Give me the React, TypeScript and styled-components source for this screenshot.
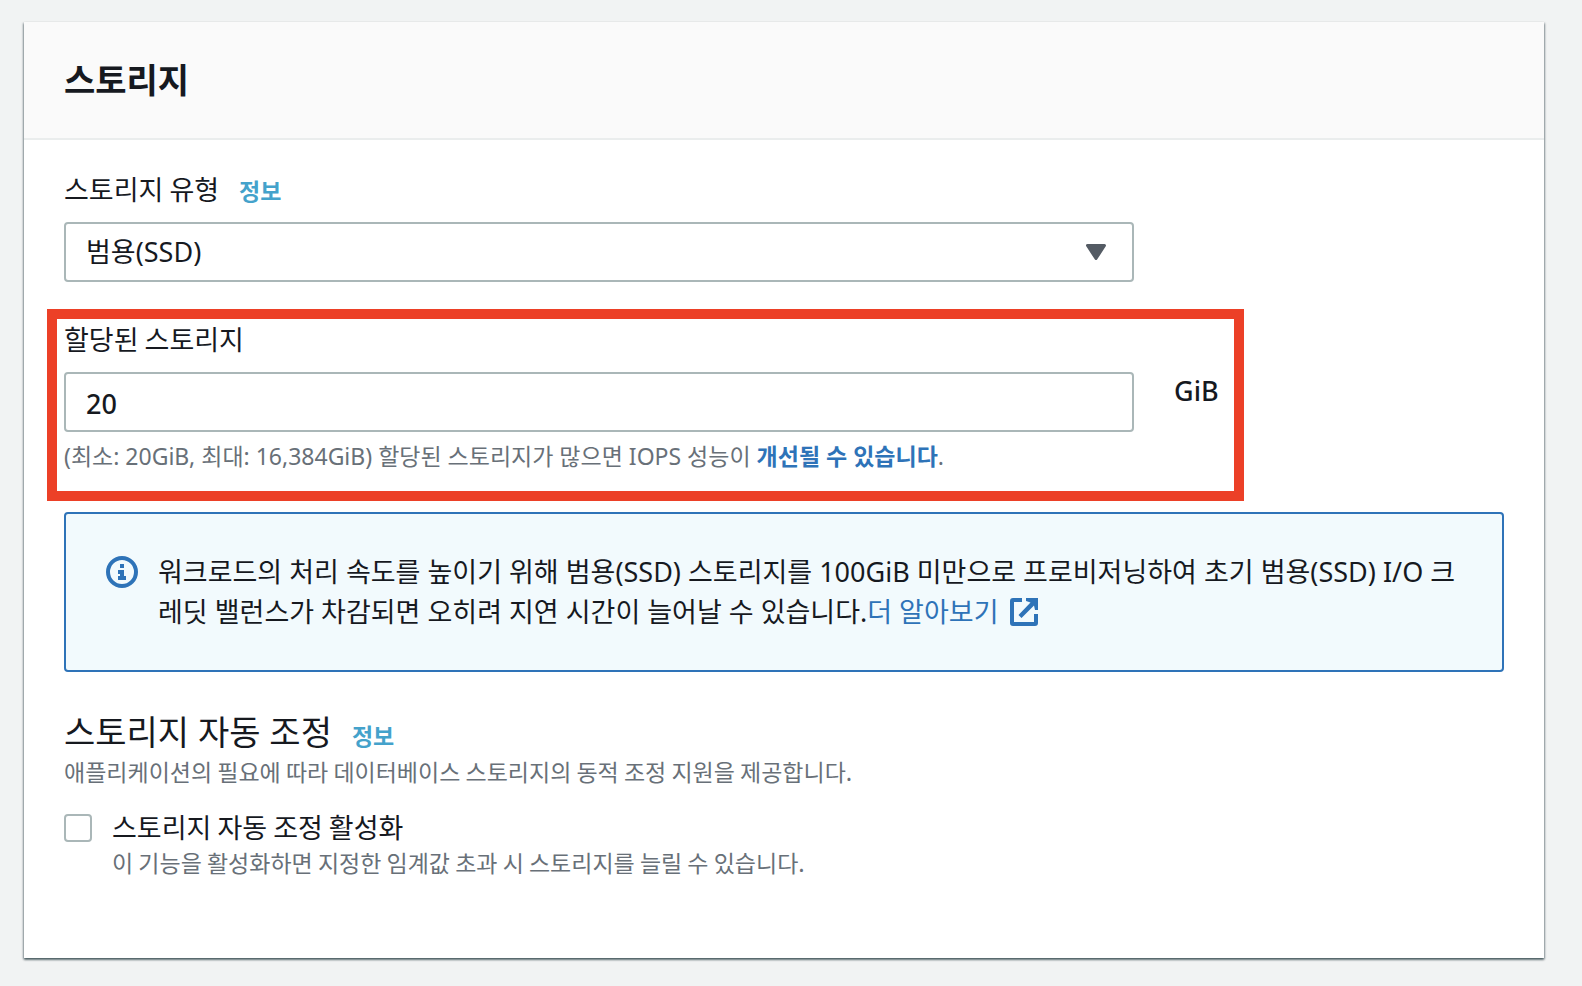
import React from 'react';
import styled, { createGlobalStyle } from 'styled-components';

const color = {
  page: '#f1f3f3',
  text: '#16191f',
  muted: '#687078',
  control: '#aab7b8',
  divider: '#eaeded',
  link: '#2e73b8',
  info: '#44a2cb',
  noticeBg: '#f2fafd',
  highlight: '#ec4027',
};

const font = {
  mixed: '"Noto Sans", "Noto Sans CJK KR", sans-serif',
  korean: '"Noto Sans CJK KR", "Noto Sans", sans-serif',
};

const GlobalStyle = createGlobalStyle`
  * { box-sizing: border-box; }
  body {
    margin: 0;
    background: ${color.page};
    color: ${color.text};
    font: 400 27px/40px ${font.mixed};
  }
  h2, h3, p { margin: 0; }
  input, select { font: inherit; color: inherit; }
`;

const Page = styled.main`
  padding: 22px 38px 28px 24px;
`;

const Card = styled.section`
  min-height: 936px;
  background: #fff;
  box-shadow: 0 2px 2px 0 rgba(0, 28, 36, 0.45), 1px 1px 2px 0 rgba(0, 28, 36, 0.3), -1px 1px 2px 0 rgba(0, 28, 36, 0.3);
`;

const CardHeader = styled.header`
  padding: 36px 40px;
  background: #fafafa;
  border-bottom: 2px solid ${color.divider};
`;

const CardTitle = styled.h2`
  font-size: 34px;
  line-height: 44px;
  font-weight: 700;
`;

const CardBody = styled.div`
  padding: 29px 40px;
`;

const TypeField = styled.div`
  width: calc(75% - 10px);
`;

const SizeField = styled.div`
  flex: 1;
`;

const LabelRow = styled.div`
  display: flex;
  align-items: baseline;
  gap: 20px;
`;

const FieldLabel = styled.label`
  display: block;
  margin-bottom: 13px;
  font-family: ${font.korean};
`;

const InfoLink = styled.a`
  color: ${color.info};
  font-size: 23px;
  line-height: 32px;
  font-weight: 700;
  text-decoration: none;
`;

const SelectBox = styled.div`
  position: relative;
`;

const Select = styled.select`
  display: block;
  width: 100%;
  height: 60px;
  padding: 0 60px 0 20px;
  appearance: none;
  background: #fff;
  border: 2px solid ${color.control};
  border-radius: 4px;
`;

const Caret = styled.svg`
  position: absolute;
  right: 28px;
  top: 22px;
  pointer-events: none;
`;

const TextInput = styled.input`
  display: block;
  width: 100%;
  height: 60px;
  padding: 2px 20px 0;
  background: #fff;
  border: 2px solid ${color.control};
  border-radius: 4px;
  font-weight: 500;
`;

const Highlight = styled.div`
  display: flex;
  gap: 40px;
  width: calc(75% + 117px);
  margin: 27px 0 11px -17px;
  padding: 0 7px 19px;
  border: 10px solid ${color.highlight};
`;

const Unit = styled.span`
  width: 53px;
  padding-top: 52px;
  font-weight: 500;
`;

const HelpText = styled.p<{ $mixed?: boolean }>`
  color: ${color.muted};
  font-family: ${(p) => (p.$mixed ? font.mixed : font.korean)};
  font-size: 23px;
  line-height: 32px;
`;

const FieldHelp = styled(HelpText)`
  margin-top: 8px;
`;

const TextLink = styled.a<{ $strong?: boolean }>`
  color: ${color.link};
  font-weight: ${(p) => (p.$strong ? 700 : 400)};
  text-decoration: none;
`;

const Notice = styled.div`
  display: flex;
  gap: 20px;
  padding: 38px 40px;
  background: ${color.noticeBg};
  border: 2px solid ${color.link};
  border-radius: 4px;
`;

const NoticeIcon = styled.svg`
  flex: none;
  margin-top: 4px;
`;

const ExternalIcon = styled.svg`
  margin-left: 12px;
  vertical-align: -4px;
`;

const Scaling = styled.section`
  margin-top: 37px;
`;

const SectionTitle = styled.h3`
  font-size: 34px;
  line-height: 46px;
  font-weight: 400;
`;

const CheckRow = styled.div`
  display: flex;
  align-items: flex-start;
  gap: 20px;
  margin-top: 21px;
`;

const Checkbox = styled.input`
  flex: none;
  width: 28px;
  height: 28px;
  margin: 6px 0 0;
  appearance: none;
  background: #fff;
  border: 2px solid ${color.control};
  border-radius: 4px;
`;

const CheckLabel = styled.label`
  display: block;
  font-family: ${font.korean};
  line-height: 38px;
`;

export default function App() {
  return (
    <>
      <GlobalStyle />
      <Page>
        <Card>
          <CardHeader>
            <CardTitle>스토리지</CardTitle>
          </CardHeader>
          <CardBody>
            <TypeField>
              <LabelRow>
                <FieldLabel htmlFor="storage-type">스토리지 유형</FieldLabel>
                <InfoLink href="#type-info">정보</InfoLink>
              </LabelRow>
              <SelectBox>
                <Select id="storage-type" defaultValue="gp">
                  <option value="gp">범용(SSD)</option>
                </Select>
                <Caret width="20" height="16" viewBox="0 0 20 16" aria-hidden="true">
                  <path d="M1.5 1.5h17L10 14.5z" fill="#545b64" stroke="#545b64" strokeWidth="3" strokeLinejoin="round" />
                </Caret>
              </SelectBox>
            </TypeField>

            <Highlight>
              <SizeField>
                <FieldLabel htmlFor="allocated">할당된 스토리지</FieldLabel>
                <TextInput id="allocated" inputMode="numeric" defaultValue="20" aria-describedby="allocated-help" />
                <FieldHelp $mixed id="allocated-help">
                  (최소: 20GiB, 최대: 16,384GiB) 할당된 스토리지가 많으면 IOPS 성능이{' '}
                  <TextLink $strong href="#iops">개선될 수 있습니다</TextLink>.
                </FieldHelp>
              </SizeField>
              <Unit>GiB</Unit>
            </Highlight>

            <Notice role="note">
              <NoticeIcon width="32" height="32" viewBox="0 0 32 32" aria-hidden="true">
                <circle cx="16" cy="16" r="14" fill="none" stroke={color.link} strokeWidth="4" />
                <path d="M14 8h4v4h-4zM12 14h6v6h2v4h-8v-4h2v-2h-2z" fill={color.link} />
              </NoticeIcon>
              <p>
                워크로드의 처리 속도를 높이기 위해 범용(SSD) 스토리지를 100GiB 미만으로 프로비저닝하여 초기 범용(SSD) I/O
                크레딧 밸런스가 차감되면 오히려 지연 시간이 늘어날 수 있습니다.
                <TextLink href="#learn-more">
                  더 알아보기
                  <ExternalIcon width="28" height="28" viewBox="0 0 28 28" aria-hidden="true">
                    <path
                      d="M12 2H3Q2 2 2 3V25Q2 26 3 26H25Q26 26 26 25V16"
                      fill="none"
                      stroke={color.link}
                      strokeWidth="4"
                    />
                    <path d="M16 0H28V12H25L24 7.5 11.5 20 8.5 17 20.5 4.500 16 3z" fill={color.link} />
                  </ExternalIcon>
                </TextLink>
              </p>
            </Notice>

            <Scaling>
              <LabelRow>
                <SectionTitle>스토리지 자동 조정</SectionTitle>
                <InfoLink href="#scaling-info">정보</InfoLink>
              </LabelRow>
              <HelpText>애플리케이션의 필요에 따라 데이터베이스 스토리지의 동적 조정 지원을 제공합니다.</HelpText>
              <CheckRow>
                <Checkbox type="checkbox" id="autoscale" aria-describedby="autoscale-help" />
                <div>
                  <CheckLabel htmlFor="autoscale">스토리지 자동 조정 활성화</CheckLabel>
                  <HelpText id="autoscale-help">이 기능을 활성화하면 지정한 임계값 초과 시 스토리지를 늘릴 수 있습니다.</HelpText>
                </div>
              </CheckRow>
            </Scaling>
          </CardBody>
        </Card>
      </Page>
    </>
  );
}
